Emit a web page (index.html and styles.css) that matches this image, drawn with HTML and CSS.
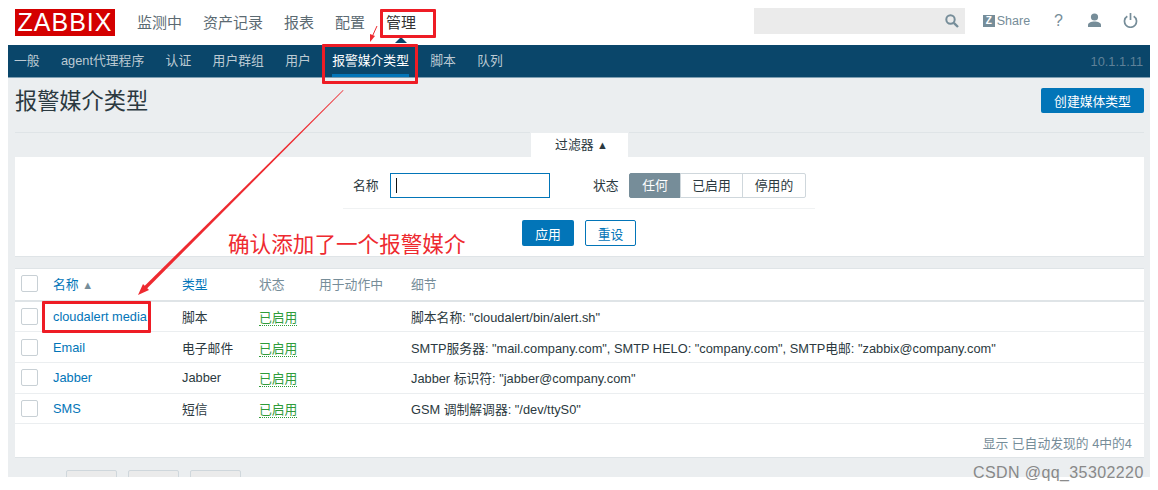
FILE: index.html
```html
<!DOCTYPE html>
<html lang="zh">
<head>
<meta charset="utf-8">
<title>报警媒介类型</title>
<link rel="stylesheet" href="styles.css">
</head>
<body>
<div class="app">
  <header class="top">
    <div class="logo">ZABBIX</div>
    <nav class="main-nav">
      <a>监测中</a><a>资产记录</a><a>报表</a><a>配置</a><a class="cur">管理</a>
    </nav>
    <div class="top-right">
      <div class="search">
        <svg class="search-ic" width="14" height="14" viewBox="0 0 14 14"><circle cx="5.5" cy="5.5" r="4.2" fill="none" stroke="#768d99" stroke-width="2"/><path d="M8.8 8.8 13 13" stroke="#768d99" stroke-width="2.4"/></svg>
      </div>
      <a class="share"><span class="z">Z</span>Share</a>
      <a class="help">?</a>
      <svg class="ic-user" width="15" height="14" viewBox="0 0 15 14"><circle cx="7.5" cy="4" r="3.6" fill="#768d99"/><path d="M1 14v-2c0-2 3-3.400 6.500-3.400S14 10 14 12v2z" fill="#768d99"/></svg>
      <svg class="ic-power" width="15" height="15" viewBox="0 0 15 15"><path d="M4.300 3.200a6 6 0 1 0 6.400 0" fill="none" stroke="#768d99" stroke-width="1.700"/><path d="M7.500 0v7" stroke="#768d99" stroke-width="1.700"/></svg>
    </div>
  </header>
  <nav class="sub-nav">
    <a>一般</a><a>agent代理程序</a><a>认证</a><a>用户群组</a><a>用户</a><a class="on">报警媒介类型</a><a>脚本</a><a>队列</a>
    <span class="host">10.1.1.11</span>
  </nav>
  <main class="content">
    <div class="title-row">
      <h1>报警媒介类型</h1>
      <button class="btn-create">创建媒体类型</button>
    </div>
    <div class="tab-row"><div class="tab">过滤器 <span class="tri">▲</span></div></div>
    <section class="filter">
      <div class="filter-fields">
        <label class="lbl-name">名称</label>
        <div class="input"><span class="caret"></span></div>
        <label class="lbl-state">状态</label>
        <div class="seg"><span class="seg-a">任何</span><span class="seg-b">已启用</span><span class="seg-c">停用的</span></div>
      </div>
      <div class="filter-btns">
        <button class="btn-apply">应用</button><button class="btn-reset">重设</button>
      </div>
    </section>
    <section class="table-box">
      <table>
        <thead>
          <tr>
            <th class="c0"><i class="cb"></i></th>
            <th class="c1 link">名称 <span class="sort">▲</span></th>
            <th class="c2 link">类型</th>
            <th class="c3">状态</th>
            <th class="c4">用于动作中</th>
            <th class="c5">细节</th>
          </tr>
        </thead>
        <tbody>
          <tr><td><i class="cb"></i></td><td><a class="lnk">cloudalert media</a></td><td>脚本</td><td><span class="ok">已启用</span></td><td></td><td>脚本名称: "cloudalert/bin/alert.sh"</td></tr>
          <tr><td><i class="cb"></i></td><td><a class="lnk">Email</a></td><td>电子邮件</td><td><span class="ok">已启用</span></td><td></td><td>SMTP服务器: "mail.company.com", SMTP HELO: "company.com", SMTP电邮: "zabbix@company.com"</td></tr>
          <tr><td><i class="cb"></i></td><td><a class="lnk">Jabber</a></td><td>Jabber</td><td><span class="ok">已启用</span></td><td></td><td>Jabber 标识符: "jabber@company.com"</td></tr>
          <tr><td><i class="cb"></i></td><td><a class="lnk">SMS</a></td><td>短信</td><td><span class="ok">已启用</span></td><td></td><td>GSM 调制解调器: "/dev/ttyS0"</td></tr>
        </tbody>
      </table>
      <div class="table-foot">显示 已自动发现的 4中的4</div>
    </section>
    <div class="bulk"><span></span><span></span><span></span></div>
  </main>
</div>
<div class="note">确认添加了一个报警媒介</div>
<div class="mark mark-a"></div>
<div class="mark mark-b"></div>
<div class="mark mark-c"></div>
<svg class="arrows" width="1158" height="490" viewBox="0 0 1158 490">
  <path d="M343 90 343.500 90.500 145 290.500 142.500 288z" fill="#ee2a30"/>
  <path d="M138 295 149 290 143 284z" fill="#ee2a30"/>
  <path d="M377 26 372 37" stroke="#ee2a30" stroke-width="1"/>
  <path d="M370 42 375 36 370 34z" fill="#ee2a30"/>
</svg>
<div class="watermark">CSDN @qq_35302220</div>
</body>
</html>
```
FILE: styles.css
```css
* { box-sizing: border-box; }
html, body { margin: 0; padding: 0; background: #fff; }
body {
  width: 1158px;
  height: 490px;
  overflow: hidden;
  position: relative;
  font-family: "Liberation Sans", "Noto Sans CJK SC", sans-serif;
  font-size: 12.8px;
  color: #2b3940;
}
.app { margin-left: 8px; width: 1142px; height: 477px; overflow: hidden; background: #ebeef0; }

.top { height: 45px; background: #fff; display: flex; align-items: center; padding: 0 0 0 7px; }
.logo {
  width: 100px; height: 27px; background: #d40000; color: #fff;
  font-size: 25px; line-height: 27px; text-align: center; letter-spacing: 1px;
  margin-top: -1px; flex: none;
}
.main-nav { display: flex; margin-left: 22px; gap: 21px; font-size: 15px; color: #5b6a72; margin-top: -2px; }
.main-nav .cur { color: #333; position: relative; }
.main-nav .cur::after {
  content: ""; position: absolute; left: 9px; bottom: -11px;
  border: 6px solid transparent; border-top: 0; border-bottom: 6px solid #0a466a;
}
.top-right { margin-left: auto; display: flex; align-items: center; height: 100%; margin-top: -1px; }
.search { width: 211px; height: 26px; background: #ebebeb; position: relative; display: flex; align-items: center; justify-content: flex-end; padding-right: 6px; margin-top: -3px; }
.share { display: flex; align-items: center; margin-left: 18px; color: #768d99; font-size: 12.5px; margin-top: -3px; }
.z { width: 12px; height: 12px; background: #768d99; color: #fff; font-weight: 700; font-size: 10px; line-height: 12px; text-align: center; margin-right: 2px; }
.help { color: #768d99; font-size: 16px; margin-left: 24px; margin-top: -3px; }
.ic-user { margin-left: 24px; margin-top: -4px; }
.ic-power { margin-left: 21px; margin-right: 12px; margin-top: -4px; }

.sub-nav { height: 33px; background: #0a466a; display: flex; align-items: center; padding: 0 7px 0 6px; color: #bccad3; font-size: 12.8px; gap: 21.400px; border-bottom: 1px solid #7f9fb2; position: relative; }
.sub-nav a { height: 32px; line-height: 31px; }
.sub-nav .on { color: #fff; box-shadow: inset 0 -3px 0 #0275b8; }
.host { margin-left: auto; color: #5f8198; font-size: 12.8px; }

.content { padding: 0 6px 0 7px; }
.title-row { height: 55px; border-bottom: 1px solid #dfe4e7; display: flex; justify-content: space-between; align-items: center; }
h1 { margin: -13px 0 0; font-size: 22.200px; font-weight: 400; color: #2b3940; }
.btn-create { width: 103px; height: 25px; background: #0275b8; border: 0; border-radius: 2px; color: #fff; font: inherit; margin-top: -9px; }
.tab-row { display: flex; justify-content: center; height: 24px; padding-right: 1px; }
.tab { width: 99px; height: 25px; margin-top: -1px; padding-left: 5px; background: #fff; border: 1px solid #ebeef0; border-bottom: 0; text-align: center; line-height: 24px; color: #2b3940; position: relative; }
.tri { font-size: 11px; }
.filter { height: 100px; background: #fff; border-bottom: 1px solid #dfe4e7; display: flex; flex-direction: column; align-items: center; }
.filter-fields { width: 472px; height: 52px; border-bottom: 1px solid #f0f2f3; display: flex; align-items: flex-start; padding: 16px 0 0 10px; margin-left: -1px; }
.lbl-name { line-height: 25px; width: 37px; }
.input { width: 160px; height: 25px; border: 1px solid #0275b8; position: relative; display: flex; align-items: center; padding-left: 5px; flex: none; }
.caret { width: 1px; height: 15px; background: #111; }
.lbl-state { line-height: 25px; margin-left: 43px; width: 36px; flex: none; }
.seg { display: flex; height: 25px; }
.seg span { display: block; line-height: 23px; text-align: center; border: 1px solid #cfd7dc; margin-left: -1px; }
.seg-a { width: 52px; background: #768d99; color: #fff; border-color: #768d99 !important; border-radius: 2px 0 0 2px; margin-left: 0 !important; }
.seg-b { width: 63px; }
.seg-c { width: 64px; border-radius: 0 2px 2px 0; }
.filter-btns { display: flex; gap: 11px; margin-top: 11px; margin-left: -1px; }
.filter-btns button { width: 52px; height: 26px; border-radius: 2px; font: inherit; }
.btn-apply { background: #0275b8; border: 0; color: #fff; }
.btn-reset { width: 51px !important; background: #fff; border: 1px solid #0275b8; color: #0275b8; }

.table-box { margin-top: 11px; height: 190px; background: #fff; border-top: 1px solid #dfe4e7; border-bottom: 1px solid #dfe4e7; }
table { border-collapse: collapse; width: 100%; table-layout: fixed; }
th { height: 32px; text-align: left; font-weight: 400; color: #768d99; border-bottom: 2px solid #dfe4e7; padding: 0 0 2px; }
th.link { color: #0275b8; }
th.c0 { width: 38px; } th.c1 { width: 129px; } th.c2 { width: 77px; } th.c3 { width: 60px; } th.c4 { width: 92px; }
.sort { font-size: 11px; color: #768d99; }
td { height: 30.7px; padding: 0; border-bottom: 1px solid #ebeef0; }
.cb { display: block; width: 17px; height: 17px; border: 1px solid #c8d0d5; border-radius: 2px; margin-left: 6px; background: #fff; }
.lnk { color: #0275b8; }
.ok { color: #2f9c3a; border-bottom: 1px dotted #2f9c3a; }
.table-foot { text-align: right; color: #768d99; padding: 9px 12px 0 0; }
.bulk { display: flex; gap: 11px; margin: 12px 0 0 51px; }
.bulk span { width: 51px; height: 26px; background: #ebebeb; border: 1px solid #cfd7dc; border-radius: 2px; }

.note { position: absolute; left: 228px; top: 231px; font-size: 21.6px; line-height: 28px; color: #ee2a30; white-space: nowrap; }
.mark { position: absolute; border: 3px solid #ee1c25; border-radius: 1px; }
.mark-a { left: 380px; top: 9px; width: 56px; height: 29px; }
.mark-b { left: 322px; top: 44px; width: 96px; height: 40px; }
.mark-c { left: 42px; top: 301px; width: 109px; height: 32px; }
.arrows { position: absolute; left: 0; top: 0; pointer-events: none; }
.watermark { position: absolute; left: 973px; top: 464px; font-size: 16px; line-height: 18px; color: #777; opacity: .85; letter-spacing: .4px; white-space: nowrap; }
```
